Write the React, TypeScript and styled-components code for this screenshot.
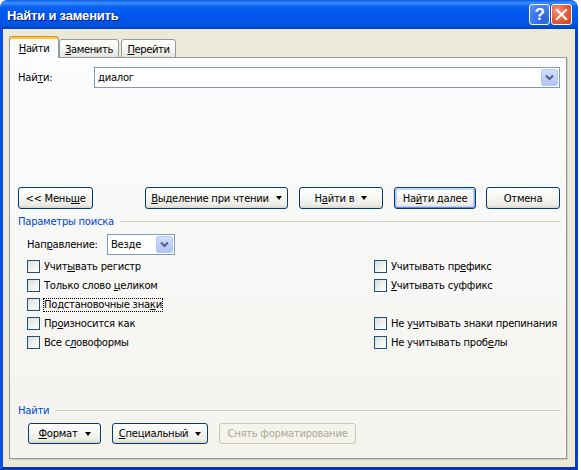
import styled, { createGlobalStyle } from "styled-components";

const GlobalStyle = createGlobalStyle`
  body {
    margin: 0;
    background: #ffffff;
    font-family: Tahoma, "DejaVu Sans", sans-serif;
    font-size: 10px;
    letter-spacing: -0.25px;
    color: #000;
  }
  * { box-sizing: border-box; }
`;

type Opt = { text: string; key: number; focus?: boolean } | null;

// key = index of the underlined (accelerator) letter
const options: Opt[] = [
  { text: "Учитывать регистр", key: 4 },
  { text: "Учитывать префикс", key: 12 },
  { text: "Только слово целиком", key: 13 },
  { text: "Учитывать суффикс", key: 0 },
  { text: "Подстановочные знаки", key: 18, focus: true },
  null,
  { text: "Произносится как", key: 2 },
  { text: "Не учитывать знаки препинания", key: 4 },
  { text: "Все словоформы", key: 5 },
  { text: "Не учитывать пробелы", key: 17 },
];

function Hot({ text, at }: { text: string; at: number }) {
  if (at < 0) return <span>{text}</span>;
  return (
    <span>
      {text.slice(0, at)}
      <u>{text[at]}</u>
      {text.slice(at + 1)}
    </span>
  );
}

function App() {
  return (
    <>
      <GlobalStyle />
      <Window>
        <TitleBar>
          <Title>Найти и заменить</Title>
          <Controls>
            <HelpButton>?</HelpButton>
            <CloseButton>
              <svg width="13" height="13" viewBox="0 0 13 13">
                <path
                  d="M2 2 L11 11 M11 2 L2 11"
                  stroke="#fff"
                  strokeWidth="2.2"
                  strokeLinecap="square"
                />
              </svg>
            </CloseButton>
          </Controls>
        </TitleBar>

        <Client>
          <Tabs>
            <Tab $active $w={50}>
              <Hot text="Найти" at={0} />
            </Tab>
            <Tab $w={60}>
              <Hot text="Заменить" at={0} />
            </Tab>
            <Tab $gap $w={55}>
              <Hot text="Перейти" at={0} />
            </Tab>
          </Tabs>

          <Panel>
            <FindRow>
              <FindLabel>
                <Hot text="Найти:" at={3} />
              </FindLabel>
              <Combo>
                <ComboText>диалог</ComboText>
                <DropButton>
                  <Chevron />
                </DropButton>
              </Combo>
            </FindRow>

            <ButtonRow>
              <Button $w={75}>
                <Hot text="<< Меньше" at={7} />
              </Button>
              <RightButtons>
                <Button $w={143}>
                  <Hot text="Выделение при чтении" at={0} />
                  <Arrow />
                </Button>
                <Button $w={84}>
                  <Hot text="Найти в" at={1} />
                  <Arrow />
                </Button>
                <Button $w={82} $default>
                  <Hot text="Найти далее" at={2} />
                </Button>
                <Button $w={74}>Отмена</Button>
              </RightButtons>
            </ButtonRow>

            <SectionHeader>
              <span>Параметры поиска</span>
              <Rule />
            </SectionHeader>

            <DirectionRow>
              <DirLabel>
                <Hot text="Направление:" at={3} />
              </DirLabel>
              <Select>
                <ComboText>Везде</ComboText>
                <DropButton>
                  <Chevron />
                </DropButton>
              </Select>
            </DirectionRow>

            <OptionsGrid>
              {options.map((o, i) =>
                o ? (
                  <CheckRow key={i}>
                    <Box />
                    <CheckLabel $focus={o.focus}>
                      <Hot text={o.text} at={o.key} />
                    </CheckLabel>
                  </CheckRow>
                ) : (
                  <span key={i} />
                )
              )}
            </OptionsGrid>

            <Bottom>
              <SectionHeader>
                <span>Найти</span>
                <Rule />
              </SectionHeader>
              <BottomButtons>
                <Button $w={73} $h={21}>
                  <Hot text="Формат" at={0} />
                  <Arrow />
                </Button>
                <Button $w={96} $h={21}>
                  <Hot text="Специальный" at={0} />
                  <Arrow />
                </Button>
                <Button $w={137} $h={21} disabled>
                  Снять форматирование
                </Button>
              </BottomButtons>
            </Bottom>
          </Panel>
        </Client>
      </Window>
    </>
  );
}

function Chevron() {
  return (
    <svg width="9" height="7" viewBox="0 0 9 7">
      <path d="M1 1.5 L4.5 5 L8 1.5" stroke="#4D6185" strokeWidth="2" fill="none" />
    </svg>
  );
}

export default App;

const Window = styled.div`
  width: 578px;
  height: 470px;
  display: flex;
  flex-direction: column;
`;

const TitleBar = styled.div`
  height: 29px;
  flex-shrink: 0;
  display: flex;
  align-items: center;
  justify-content: space-between;
  padding: 0 6px 0 7px;
  border-radius: 7px 7px 0 0;
  background: linear-gradient(
    180deg,
    #0a5ce6 0%,
    #3d8ffb 10%,
    #0b63f2 22%,
    #0058ee 45%,
    #0055e8 70%,
    #0053e0 88%,
    #0042c2 100%
  );
`;

const Title = styled.div`
  font-family: "Liberation Sans", Arial, sans-serif;
  font-weight: bold;
  font-size: 13px;
  letter-spacing: -0.2px;
  color: #fff;
  text-shadow: 1px 1px 0 #0a1e6e;
  padding-top: 1px;
`;

const Controls = styled.div`
  display: flex;
`;

const CtrlButton = styled.div`
  width: 21px;
  height: 21px;
  border: 1px solid #fff;
  border-radius: 3px;
  display: flex;
  align-items: center;
  justify-content: center;
  margin-left: 1px;
`;

const HelpButton = styled(CtrlButton)`
  background: radial-gradient(circle at 70% 80%, #2c61e0 0%, #3b78f2 50%, #5a93f8 100%);
  color: #fff;
  font-family: "Liberation Sans", Arial, sans-serif;
  font-weight: bold;
  font-size: 17px;
`;

const CloseButton = styled(CtrlButton)`
  background: radial-gradient(circle at 30% 30%, #f09377 0%, #e5603c 45%, #cc4221 100%);
`;

const Client = styled.div`
  flex: 1;
  display: flex;
  flex-direction: column;
  background: #ece9d8;
  border: 3px solid #0a4fe0;
  border-top: none;
  border-right-color: #0741c9;
  border-bottom-color: #0636b8;
  padding: 7px 8px 8px 6px;
`;

const Tabs = styled.div`
  display: flex;
  align-items: flex-end;
  height: 22px;
  margin-bottom: -1px;
  position: relative;
  z-index: 1;
`;

const Tab = styled.div<{ $active?: boolean; $gap?: boolean; $w: number }>`
  width: ${(p) => p.$w}px;
  height: ${(p) => (p.$active ? 22 : 19)}px;
  margin-left: ${(p) => (p.$gap ? 2 : 0)}px;
  display: flex;
  align-items: center;
  justify-content: center;
  white-space: nowrap;
  letter-spacing: -0.4px;
  padding-top: ${(p) => (p.$active ? 2 : 1)}px;
  border: 1px solid #919b9c;
  border-bottom: ${(p) => (p.$active ? "none" : "1px solid #919b9c")};
  border-radius: 3px 3px 0 0;
  background: ${(p) =>
    p.$active ? "#fcfcfe" : "linear-gradient(180deg, #ffffff 0%, #f3f3ef 60%, #e6e5de 100%)"};
  ${(p) =>
    p.$active &&
    `border-top: 1px solid #e68b2c; box-shadow: inset 0 2px 0 #ffc73c;`}
`;

const Panel = styled.div`
  flex: 1;
  display: flex;
  flex-direction: column;
  border: 1px solid #919b9c;
  box-shadow: 1px 1px 0 #d0cdbc;
  background: linear-gradient(180deg, #fcfcfe 0%, #f4f3ee 100%);
  padding: 9px 6px 14px 8px;
  white-space: nowrap;
`;

const FindRow = styled.div`
  display: flex;
  align-items: center;
  height: 21px;
`;

const FindLabel = styled.div`
  width: 76px;
`;

const Combo = styled.div`
  flex: 1;
  height: 21px;
  border: 1px solid #7f9db9;
  background: #fff;
  display: flex;
  align-items: center;
  padding: 1px;
`;

const ComboText = styled.div`
  flex: 1;
  padding-left: 2px;
`;

const DropButton = styled.div`
  width: 17px;
  height: 17px;
  border-radius: 2px;
  border: 1px solid #b9cbf3;
  background: linear-gradient(180deg, #d2defb 0%, #bccef8 60%, #b0c4f5 100%);
  display: flex;
  align-items: center;
  justify-content: center;
`;

const ButtonRow = styled.div`
  display: flex;
  margin-top: 99px;
`;

const RightButtons = styled.div`
  margin-left: auto;
  display: flex;
  gap: 11px;
  & > :last-child {
    margin-left: -1px;
  }
`;

const Button = styled.button<{ $w: number; $h?: number; $default?: boolean }>`
  width: ${(p) => p.$w}px;
  height: ${(p) => p.$h ?? 22}px;
  font: inherit;
  letter-spacing: inherit;
  color: #000;
  padding: 0;
  white-space: nowrap;
  display: flex;
  align-items: center;
  justify-content: center;
  gap: 7px;
  border: 1px solid #003c74;
  border-radius: 3px;
  background: linear-gradient(180deg, #ffffff 0%, #f6f6f2 45%, #ecebe6 85%, #d8d3c8 100%);
  box-shadow: ${(p) =>
    p.$default
      ? "inset 0 1px 0 #cee7ff, inset 0 -1px 0 #6982ee, inset 1px 0 0 #a8c6f6, inset -1px 0 0 #8fb0f0, inset 0 0 0 2px #b9d1fa"
      : "none"};
  &:disabled {
    border-color: #c9c7ba;
    color: #aca899;
    background: #f5f4ea;
  }
`;

const Arrow = styled.span`
  width: 0;
  height: 0;
  border-left: 3.5px solid transparent;
  border-right: 3.5px solid transparent;
  border-top: 4px solid #000;
`;

const SectionHeader = styled.div`
  display: flex;
  align-items: center;
  gap: 6px;
  color: #0046d5;
  margin-top: 6px;
  height: 13px;
`;

const Rule = styled.div`
  flex: 1;
  height: 1px;
  background: #d0d0bf;
  margin-right: -1px;
`;

const DirectionRow = styled.div`
  display: flex;
  align-items: center;
  height: 21px;
  margin-top: 6px;
  padding-left: 9px;
`;

const DirLabel = styled.div`
  width: 80px;
`;

const Select = styled(Combo)`
  flex: none;
  width: 68px;
`;

const OptionsGrid = styled.div`
  display: grid;
  grid-template-columns: 347px 1fr;
  grid-auto-rows: 19px;
  margin-top: 2px;
  padding-left: 9px;
`;

const CheckRow = styled.div`
  display: flex;
  align-items: center;
  gap: 3px;
`;

const Box = styled.span`
  width: 13px;
  height: 13px;
  flex-shrink: 0;
  border: 1px solid #1c5180;
  background: linear-gradient(135deg, #dcdcd7 0%, #f2f2ee 55%, #ffffff 100%);
`;

const CheckLabel = styled.span<{ $focus?: boolean }>`
  padding: 1px 1px 2px;
  outline: ${(p) => (p.$focus ? "1px dotted #000" : "none")};
  outline-offset: -1px;
`;

const Bottom = styled.div`
  margin-top: auto;
`;

const BottomButtons = styled.div`
  display: flex;
  gap: 11px;
  padding-left: 10px;
  margin-top: 6px;
`;
